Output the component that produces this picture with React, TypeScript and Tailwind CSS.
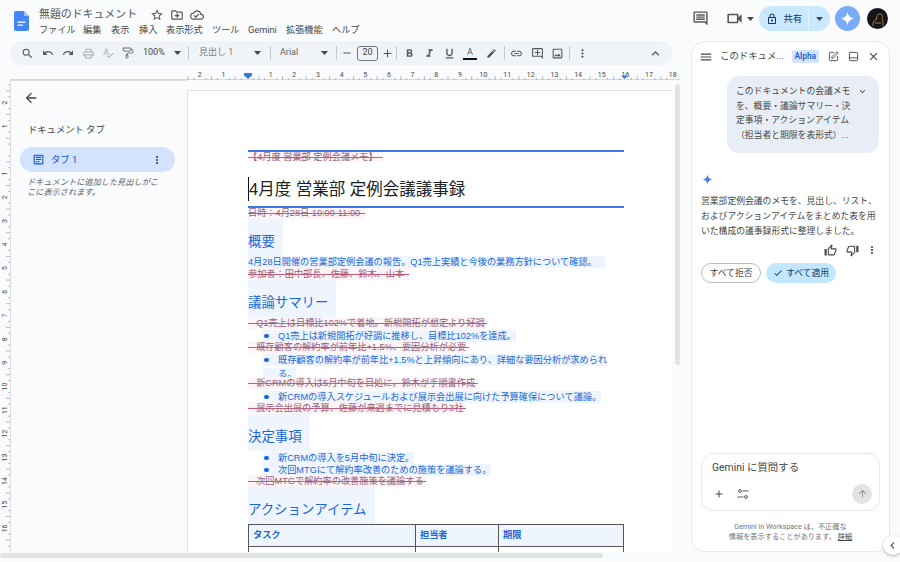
import React from "react";
import {
  MdSearch, MdUndo, MdRedo, MdOutlinePrint, MdOutlineSpellcheck, MdRemove, MdAdd,
  MdFormatBold, MdFormatItalic, MdFormatUnderlined, MdEdit, MdLink, MdOutlineAddComment, MdOutlineImage,
  MdMoreVert, MdExpandLess, MdStarBorder, MdOutlineDriveFileMove, MdOutlineCloudDone, MdOutlineInsertComment,
  MdOutlineVideocam, MdOutlineLock, MdArrowBack, MdMenu, MdClose, MdOutlineThumbUp, MdOutlineThumbDown,
  MdArrowUpward, MdChevronLeft, MdOutlineArticle, MdKeyboardArrowDown, MdCheck,
} from "react-icons/md";
import { SquarePen, PanelBottom, PaintRoller } from "lucide-react";

const Caret = () => (
  <svg width="7" height="4" viewBox="0 0 7 4" className="shrink-0"><path d="M0 0h7L3.5 4z" fill="#444746" /></svg>
);

const Spark = ({ size, color }: { size: number; color: string }) => (
  <svg width={size} height={size} viewBox="0 0 24 24">
    <path d="M12 1c.8 6 4.9 10.200 11 11-6.100.8-10.200 4.900-11 11-.8-6.100-4.900-10.200-11-11 6.100-.8 10.200-5 11-11z" fill={color} />
  </svg>
);

const Sep = () => <div className="w-px h-[14px] bg-[#c7c7c7] shrink-0" />;

const Slot = ({ children, w = 20, dim }: { children: React.ReactNode; w?: number; dim?: boolean }) => (
  <div style={{ width: w }} className={`h-[20px] shrink-0 flex items-center justify-center ${dim ? "text-[#b4b7ba]" : "text-[#555858]"}`}>
    {children}
  </div>
);

const menus: [string, number][] = [
  ["ファイル", 44], ["編集", 28], ["表示", 28], ["挿入", 27], ["表示形式", 46], ["ツール", 36], ["Gemini", 38], ["拡張機能", 46], ["ヘルプ", 30],
];

function Header() {
  return (
    <div className="h-[40px] flex items-start shrink-0">
      <div className="w-[39px] pl-[14px] pt-[11px] shrink-0">
        <svg width="15" height="20" viewBox="0 0 15 20">
          <path d="M2 0h8l5 5v13a2 2 0 0 1-2 2H2a2 2 0 0 1-2-2V2a2 2 0 0 1 2-2z" fill="#4285f4" />
          <path d="M10 0l5 5h-3.500A1.500 1.500 0 0 1 10 3.500z" fill="#a9c6fb" />
          <path d="M3.500 10.500h8v1.300h-8zM3.500 13.500h5.500v1.300h-5.500z" fill="#fff" />
        </svg>
      </div>
      <div className="flex flex-col w-[480px] shrink-0">
        <div className="flex items-center h-[14px] mt-[8px] text-[#555858]">
          <span className="text-[10.9px] w-[110px] whitespace-nowrap">無題のドキュメント</span>
          <div className="flex items-center gap-[6px] ml-[1px]">
            <MdStarBorder size={14} />
            <MdOutlineDriveFileMove size={14} />
            <MdOutlineCloudDone size={14} />
          </div>
        </div>
        <div className="flex items-center h-[12px] mt-[2px] text-[9.2px] text-[#444746]">
          {menus.map(([m, w]) => (
            <span key={m} style={{ width: w }} className="whitespace-nowrap shrink-0">{m}</span>
          ))}
        </div>
      </div>
      <div className="flex-1 flex items-center justify-end h-[37px] pr-[12px]">
        <MdOutlineInsertComment size={17} className="text-[#555858]" />
        <div className="flex items-center ml-[16px] w-[34px] text-[#555858]">
          <MdOutlineVideocam size={19} />
          <div className="ml-[3px]"><Caret /></div>
        </div>
        <div className="w-[71px] h-[25px] rounded-full bg-[#c9e7fd] flex items-center text-[#0b3a6b]">
          <div className="w-[50px] flex items-center justify-end gap-[5px] pr-[6px] h-full border-r border-[#e4f3fe]">
            <MdOutlineLock size={12} />
            <span className="text-[9.3px]">共有</span>
          </div>
          <div className="flex-1 flex justify-center"><Caret /></div>
        </div>
        <div className="ml-[5px] w-[25px] h-[25px] rounded-full bg-[#7aaaf8] flex items-center justify-center">
          <Spark size={15} color="#fff" />
        </div>
        <div className="ml-[7px] w-[21px] h-[21px] rounded-full bg-[#14161c] flex items-center justify-center overflow-hidden">
          <svg width="15" height="16" viewBox="0 0 15 16" fill="none" stroke="#a8833f" strokeWidth="1">
            <path d="M3 15c0-4 1-6 4-7-1-2 0-5 3-5s3 3 2 5c1 2 1 5 1 7M5 12h6" />
          </svg>
        </div>
      </div>
    </div>
  );
}

function Toolbar() {
  return (
    <div className="ml-[10px] mt-[1px] w-[662px] h-[24px] rounded-full bg-[#f0f4f9] flex items-center pl-[7px] text-[#444746] shrink-0">
      <Slot><MdSearch size={13} /></Slot>
      <Slot w={21}><MdUndo size={12} /></Slot>
      <Slot><MdRedo size={12} /></Slot>
      <Slot dim><MdOutlinePrint size={13} /></Slot>
      <Slot dim><MdOutlineSpellcheck size={12} /></Slot>
      <Slot><PaintRoller size={12} strokeWidth={1.6} /></Slot>
      <div className="w-[50px] flex items-center pl-[5px] text-[9px] shrink-0">
        <span className="w-[31px]">100%</span><Caret />
      </div>
      <Sep />
      <div className="w-[81px] flex items-center pl-[10px] text-[9px] text-[#7a7d80] shrink-0">
        <span className="w-[55px]">見出し 1</span><Caret />
      </div>
      <Sep />
      <div className="w-[65px] flex items-center pl-[9px] text-[9px] text-[#5f6368] shrink-0">
        <span className="w-[41px]">Arial</span><Caret />
      </div>
      <Sep />
      <Slot><MdRemove size={12} /></Slot>
      <div className="w-[21px] h-[15px] border border-[#747775] rounded-[3px] flex items-center justify-center text-[9px] shrink-0">20</div>
      <Slot w={18}><MdAdd size={13} /></Slot>
      <Sep />
      <div className="ml-[2px]" />
      <Slot><MdFormatBold size={13} /></Slot>
      <Slot><MdFormatItalic size={13} /></Slot>
      <Slot><MdFormatUnderlined size={13} /></Slot>
      <Slot w={22}>
        <div className="flex flex-col items-center">
          <span className="text-[9px] leading-[10px]">A</span>
          <div className="w-[14px] h-[2px] bg-[#111] mt-[1px]" />
        </div>
      </Slot>
      <Slot><MdEdit size={11} /></Slot>
      <div className="ml-[3px]"><Sep /></div>
      <Slot w={22}><MdLink size={13} /></Slot>
      <Slot><MdOutlineAddComment size={13} /></Slot>
      <Slot><MdOutlineImage size={13} /></Slot>
      <div className="ml-[2px]"><Sep /></div>
      <Slot w={24}><MdMoreVert size={13} /></Slot>
      <div className="flex-1" />
      <Slot><MdExpandLess size={15} /></Slot>
      <div className="w-[7px] shrink-0" />
    </div>
  );
}

const HX0 = 247;
const UNIT = 23.65;

function HRuler() {
  const ticks: React.ReactNode[] = [];
  for (let i = -10; i <= 72; i++) {
    const x = HX0 + (i * UNIT) / 4;
    if (x > 679) continue;
    const h = i % 4 === 0 ? 0 : i % 2 === 0 ? 4 : 2;
    if (h) ticks.push(<line key={i} x1={x} x2={x} y1={15 - h} y2={15} stroke="#9aa0a6" strokeWidth="0.7" />);
  }
  const nums: React.ReactNode[] = [];
  for (let n = -2; n <= 18; n++) {
    if (n === 0) continue;
    nums.push(
      <text key={n} x={HX0 + n * UNIT} y={11.5} textAnchor="middle" fontSize="7" fill="#444746" fontFamily="Roboto">{Math.abs(n)}</text>
    );
  }
  return (
    <div className="h-[15px] shrink-0">
      <svg width="680" height="15" viewBox="0 0 680 15" className="block">
        <line x1="10" x2="680" y1="14.5" y2="14.5" stroke="#d5d8dc" />
        {ticks}
        {nums}
        <path d="M244 8h8v2.500l-4 3.500-4-3.500z" fill="#3b78e7" />
        <path d="M621 10.500h7l-3.500 3.500z" fill="#3b78e7" />
      </svg>
    </div>
  );
}

function VRuler() {
  const y0 = 70;
  const items: React.ReactNode[] = [];
  for (let i = -12; i <= 76; i++) {
    const y = y0 + (i * UNIT) / 4;
    if (y < 2 || y > 470) continue;
    if (i % 4 === 0) {
      const n = i / 4;
      if (n !== 0 && y < 460) {
        items.push(
          <text key={i} x="0" y="0" transform={`translate(6.5 ${y}) rotate(-90)`} textAnchor="middle" fontSize="7" fill="#444746" fontFamily="Roboto">{Math.abs(n)}</text>
        );
      }
    } else {
      const w = i % 2 === 0 ? 4 : 2;
      items.push(<line key={i} x1={10 - w} x2={10} y1={y} y2={y} stroke="#9aa0a6" strokeWidth="0.7" />);
    }
  }
  return (
    <div className="w-[10px] shrink-0">
      <svg width="10" height="472" viewBox="0 0 10 472" className="block">{items}</svg>
    </div>
  );
}

function Sidebar() {
  return (
    <div className="w-[177px] shrink-0 border-l border-t border-[#dadce0] flex flex-col pl-[9px]">
      <div className="pl-[3px] pt-[9px] h-[35px] text-[#444746]"><MdArrowBack size={16} /></div>
      <div className="pl-[8px] mt-[8px] h-[12px] leading-[12px] text-[9.3px] text-[#444746]">ドキュメント タブ</div>
      <div className="mt-[11px] w-[155px] h-[25px] rounded-full bg-[#d3e3fd] flex items-center pl-[12px] pr-[12px] text-[#0b57d0]">
        <MdOutlineArticle size={13} />
        <span className="ml-[6px] text-[9.3px] flex-1">タブ 1</span>
        <MdMoreVert size={12} className="text-[#444746]" />
      </div>
      <div className="mt-[5px] pl-[7px] w-[141px] text-[8.2px] leading-[10px] italic text-[#5f6368]">
        ドキュメントに追加した見出しがここに表示されます。
      </div>
    </div>
  );
}

const Del = ({ children }: { children: React.ReactNode }) => (
  <div className="h-[12px] leading-[12px] whitespace-nowrap">
    <span className="inline-block h-[12px] bg-[#fdf4f8] text-[#93607c] line-through decoration-[#b9607f]">{children}</span>
  </div>
);

const Li = ({ children, bullet = true }: { children: React.ReactNode; bullet?: boolean }) => (
  <div className="h-[12px] leading-[12px] whitespace-nowrap pl-[15px]">
    <span className="inline-flex items-center h-[12px] bg-[#eef5ff] text-[#1a66d8]">
      <span className="w-[15px] flex justify-start pl-[1px] shrink-0">
        {bullet && <span className="w-[4.5px] h-[4.5px] rounded-full bg-[#1a66d8]" />}
      </span>
      {children}
    </span>
  </div>
);

const H2 = ({ children }: { children: React.ReactNode }) => (
  <div className="h-[37px] flex">
    <div className="h-full flex items-end pb-[5px] pr-[8px] bg-[#eef5ff] text-[13.4px] leading-[18px] text-[#1a66d8] whitespace-nowrap">
      {children}
    </div>
  </div>
);

const Cell = ({ children }: { children?: React.ReactNode }) => (
  <div className="h-[22px] bg-[#eef5ff] border-r border-b border-[#555] flex items-center pl-[4px]">{children}</div>
);

function Page() {
  return (
    <div className="mt-[10px] w-[485px] flex-1 bg-white border-l border-t border-[#dfe1e5] overflow-hidden pl-[60px] pt-[59px] font-['Liberation_Sans','Noto_Sans_CJK_JP',sans-serif] text-[9.2px]">
      <div className="w-[376px]">
        <div className="h-[2px] bg-[#3b78e7]" />
        <div className="h-[10px] leading-[10px] whitespace-nowrap">
          <span className="inline-block bg-[#fdf4f8] text-[#93607c] line-through decoration-[#b9607f]">{"【4月度 営業部 定例会議メモ】\u00A0\u00A0"}</span>
        </div>
        <div className="mt-[15px] h-[24px] leading-[24px] text-[16.5px] text-[#202124] whitespace-nowrap border-l border-[#111]">4月度 営業部 定例会議議事録</div>
        <div className="mt-[5px] h-[2px] bg-[#3b78e7]" />
        <div className="h-[11px] leading-[11px] whitespace-nowrap">
          <span className="inline-block bg-[#fdf4f8] text-[#93607c] line-through decoration-[#b9607f]">{"日時：4月28日 10:00-11:00\u00A0\u00A0"}</span>
        </div>
        <H2>概要</H2>
        <div className="h-[12px] leading-[12px] whitespace-nowrap">
          <span className="inline-block pr-[8px] bg-[#eef5ff] text-[#1a66d8]">4月28日開催の営業部定例会議の報告。Q1売上実績と今後の業務方針について確認。</span>
        </div>
        <Del>{"参加者：田中部長、佐藤、鈴木、山本\u00A0\u00A0"}</Del>
        <H2>議論サマリー</H2>
        <Del>{"\u00A0-\u00A0Q1売上は目標比102%で着地。新規開拓が想定より好調\u00A0"}</Del>
        <Li>Q1売上は新規開拓が好調に推移し、目標比102%を達成。</Li>
        <Del>{"\u00A0-\u00A0既存顧客の解約率が前年比+1.5%、要因分析が必要\u00A0"}</Del>
        <Li>既存顧客の解約率が前年比+1.5%と上昇傾向にあり、詳細な要因分析が求められ</Li>
        <Li bullet={false}>る。</Li>
        <Del>{"\u00A0-\u00A0新CRMの導入は5月中旬を目処に。鈴木が手順書作成\u00A0"}</Del>
        <div className="mt-[1px]"><Li>新CRMの導入スケジュールおよび展示会出展に向けた予算確保について議論。</Li></div>
        <Del>{"\u00A0-\u00A0展示会出展の予算、佐藤が来週までに見積もり3社\u00A0"}</Del>
        <H2>決定事項</H2>
        <Li>新CRMの導入を5月中旬に決定。</Li>
        <Li>次回MTGにて解約率改善のための施策を議論する。</Li>
        <Del>{"\u00A0-\u00A0次回MTGで解約率の改善施策を議論する\u00A0"}</Del>
        <H2>アクションアイテム</H2>
        <div className="w-[376px] grid grid-cols-[167px_83px_1fr] border-t border-l border-[#555] font-bold text-[#1a66d8]">
          <Cell>タスク</Cell>
          <Cell>担当者</Cell>
          <Cell>期限</Cell>
          <div className="h-[22px] border-r border-[#555]" />
          <div className="h-[22px] border-r border-[#555]" />
          <div className="h-[22px] border-r border-[#555]" />
        </div>
      </div>
    </div>
  );
}

function Panel() {
  return (
    <div className="ml-[11px] w-[199px] h-[511px] shrink-0 bg-white rounded-[14px] border border-[#e6e8ec] flex flex-col relative text-[#444746]">
      <div className="h-[29px] flex items-center pl-[7px] pr-[9px] shrink-0">
        <MdMenu size={14} />
        <span className="ml-[7px] text-[9.4px] w-[70px] whitespace-nowrap">このドキュメ...</span>
        <span className="ml-[2px] bg-[#d3e3fd] text-[#0b57d0] text-[8.4px] font-medium h-[13px] leading-[13px] px-[2.5px] rounded-[2px]">Alpha</span>
        <div className="flex-1" />
        <SquarePen size={11} />
        <PanelBottom size={11} className="ml-[9px]" />
        <MdClose size={13} className="ml-[8px]" />
      </div>
      <div className="ml-[35px] mt-[5px] w-[152px] h-[77px] rounded-[12px] bg-[#e9eef6] pl-[9px] pt-[8px] relative shrink-0">
        <div className="w-[116px] text-[8.8px] leading-[14.7px] text-[#444746]">
          このドキュメントの会議メモを、概要・議論サマリー・決定事項・アクションアイテム（担当者と期限を表形式）...
        </div>
        <MdKeyboardArrowDown size={11} className="absolute right-[11px] top-[10px]" />
      </div>
      <div className="ml-[10px] mt-[21px]"><Spark size={11} color="#4a86f0" /></div>
      <div className="ml-[9px] mt-[9px] w-[178px] text-[8.8px] leading-[14.8px] text-[#444746]">
        営業部定例会議のメモを、見出し、リスト、およびアクションアイテムをまとめた表を用いた構成の議事録形式に整理しました。
      </div>
      <div className="flex items-center justify-end pr-[11px] mt-[5px] gap-[9px] h-[14px]">
        <MdOutlineThumbUp size={13} />
        <MdOutlineThumbDown size={13} />
        <MdMoreVert size={12} className="-ml-[2px]" />
      </div>
      <div className="flex ml-[9px] mt-[6px] gap-[5px]">
        <div className="w-[60px] h-[20px] rounded-full border border-[#b9bcbf] flex items-center justify-center text-[8.8px]">すべて拒否</div>
        <div className="w-[70px] h-[20px] rounded-full bg-[#c2e7ff] flex items-center justify-center gap-[3px] text-[8.8px] text-[#0b3a6b]">
          <MdCheck size={10} /> すべて適用
        </div>
      </div>
      <div className="flex-1" />
      <div className="mx-[9px] h-[58px] rounded-[12px] border border-[#e3e7ee] flex flex-col shrink-0">
        <div className="pl-[10px] pt-[7px] h-[28px] text-[10.4px] leading-[14px] text-[#444746]">Gemini に質問する</div>
        <div className="flex items-center pl-[11px] pr-[7px] flex-1 pb-[5px]">
          <MdAdd size={12} />
          <svg width="12" height="12" viewBox="0 0 12 12" fill="none" stroke="#444746" strokeWidth="0.9" className="ml-[12px]">
            <circle cx="3" cy="3" r="1.4" />
            <path d="M5.5 3H11.500M0.500 9H6.500" />
            <circle cx="9" cy="9" r="1.4" />
          </svg>
          <div className="flex-1" />
          <div className="w-[20px] h-[20px] rounded-full bg-[#e3e3e3] flex items-center justify-center text-[#8d9092]">
            <MdArrowUpward size={11} />
          </div>
        </div>
      </div>
      <div className="mt-[11px] mb-[9px] text-center text-[7.2px] leading-[10px] text-[#70757a] shrink-0">
        Gemini in Workspace は、不正確な<br />情報を表示することがあります。<span className="underline text-[#444746] ml-[2px]">詳細</span>
      </div>
    </div>
  );
}

export default function App() {
  return (
    <div className="relative w-[900px] h-[562px] overflow-hidden bg-[#f9fbfd] flex flex-col font-['Roboto','Noto_Sans_CJK_JP',sans-serif]">
      <Header />
      <div className="flex flex-1">
        <div className="w-[680px] shrink-0 flex flex-col">
          <Toolbar />
          <HRuler />
          <div className="flex h-[472px]">
            <VRuler />
            <Sidebar />
            <div className="flex flex-col w-[493px] shrink-0"><Page /></div>
          </div>
          <div className="h-[10px] pt-[1px]">
            <div className="w-[603px] h-[5px] rounded-full bg-[#e2e3e3]" />
          </div>
        </div>
        <div className="pt-[1px]"><Panel /></div>
      </div>
      <div className="absolute left-[675px] top-[84px] w-[5px] h-[281px] rounded-full bg-[#e2e3e3]" />
      <div className="absolute left-[883px] top-[535px] w-[20px] h-[20px] rounded-full bg-white shadow-[0_1px_3px_rgba(0,0,0,0.3)] flex items-center pl-[3px] text-[#444746]">
        <MdChevronLeft size={13} />
      </div>
    </div>
  );
}
